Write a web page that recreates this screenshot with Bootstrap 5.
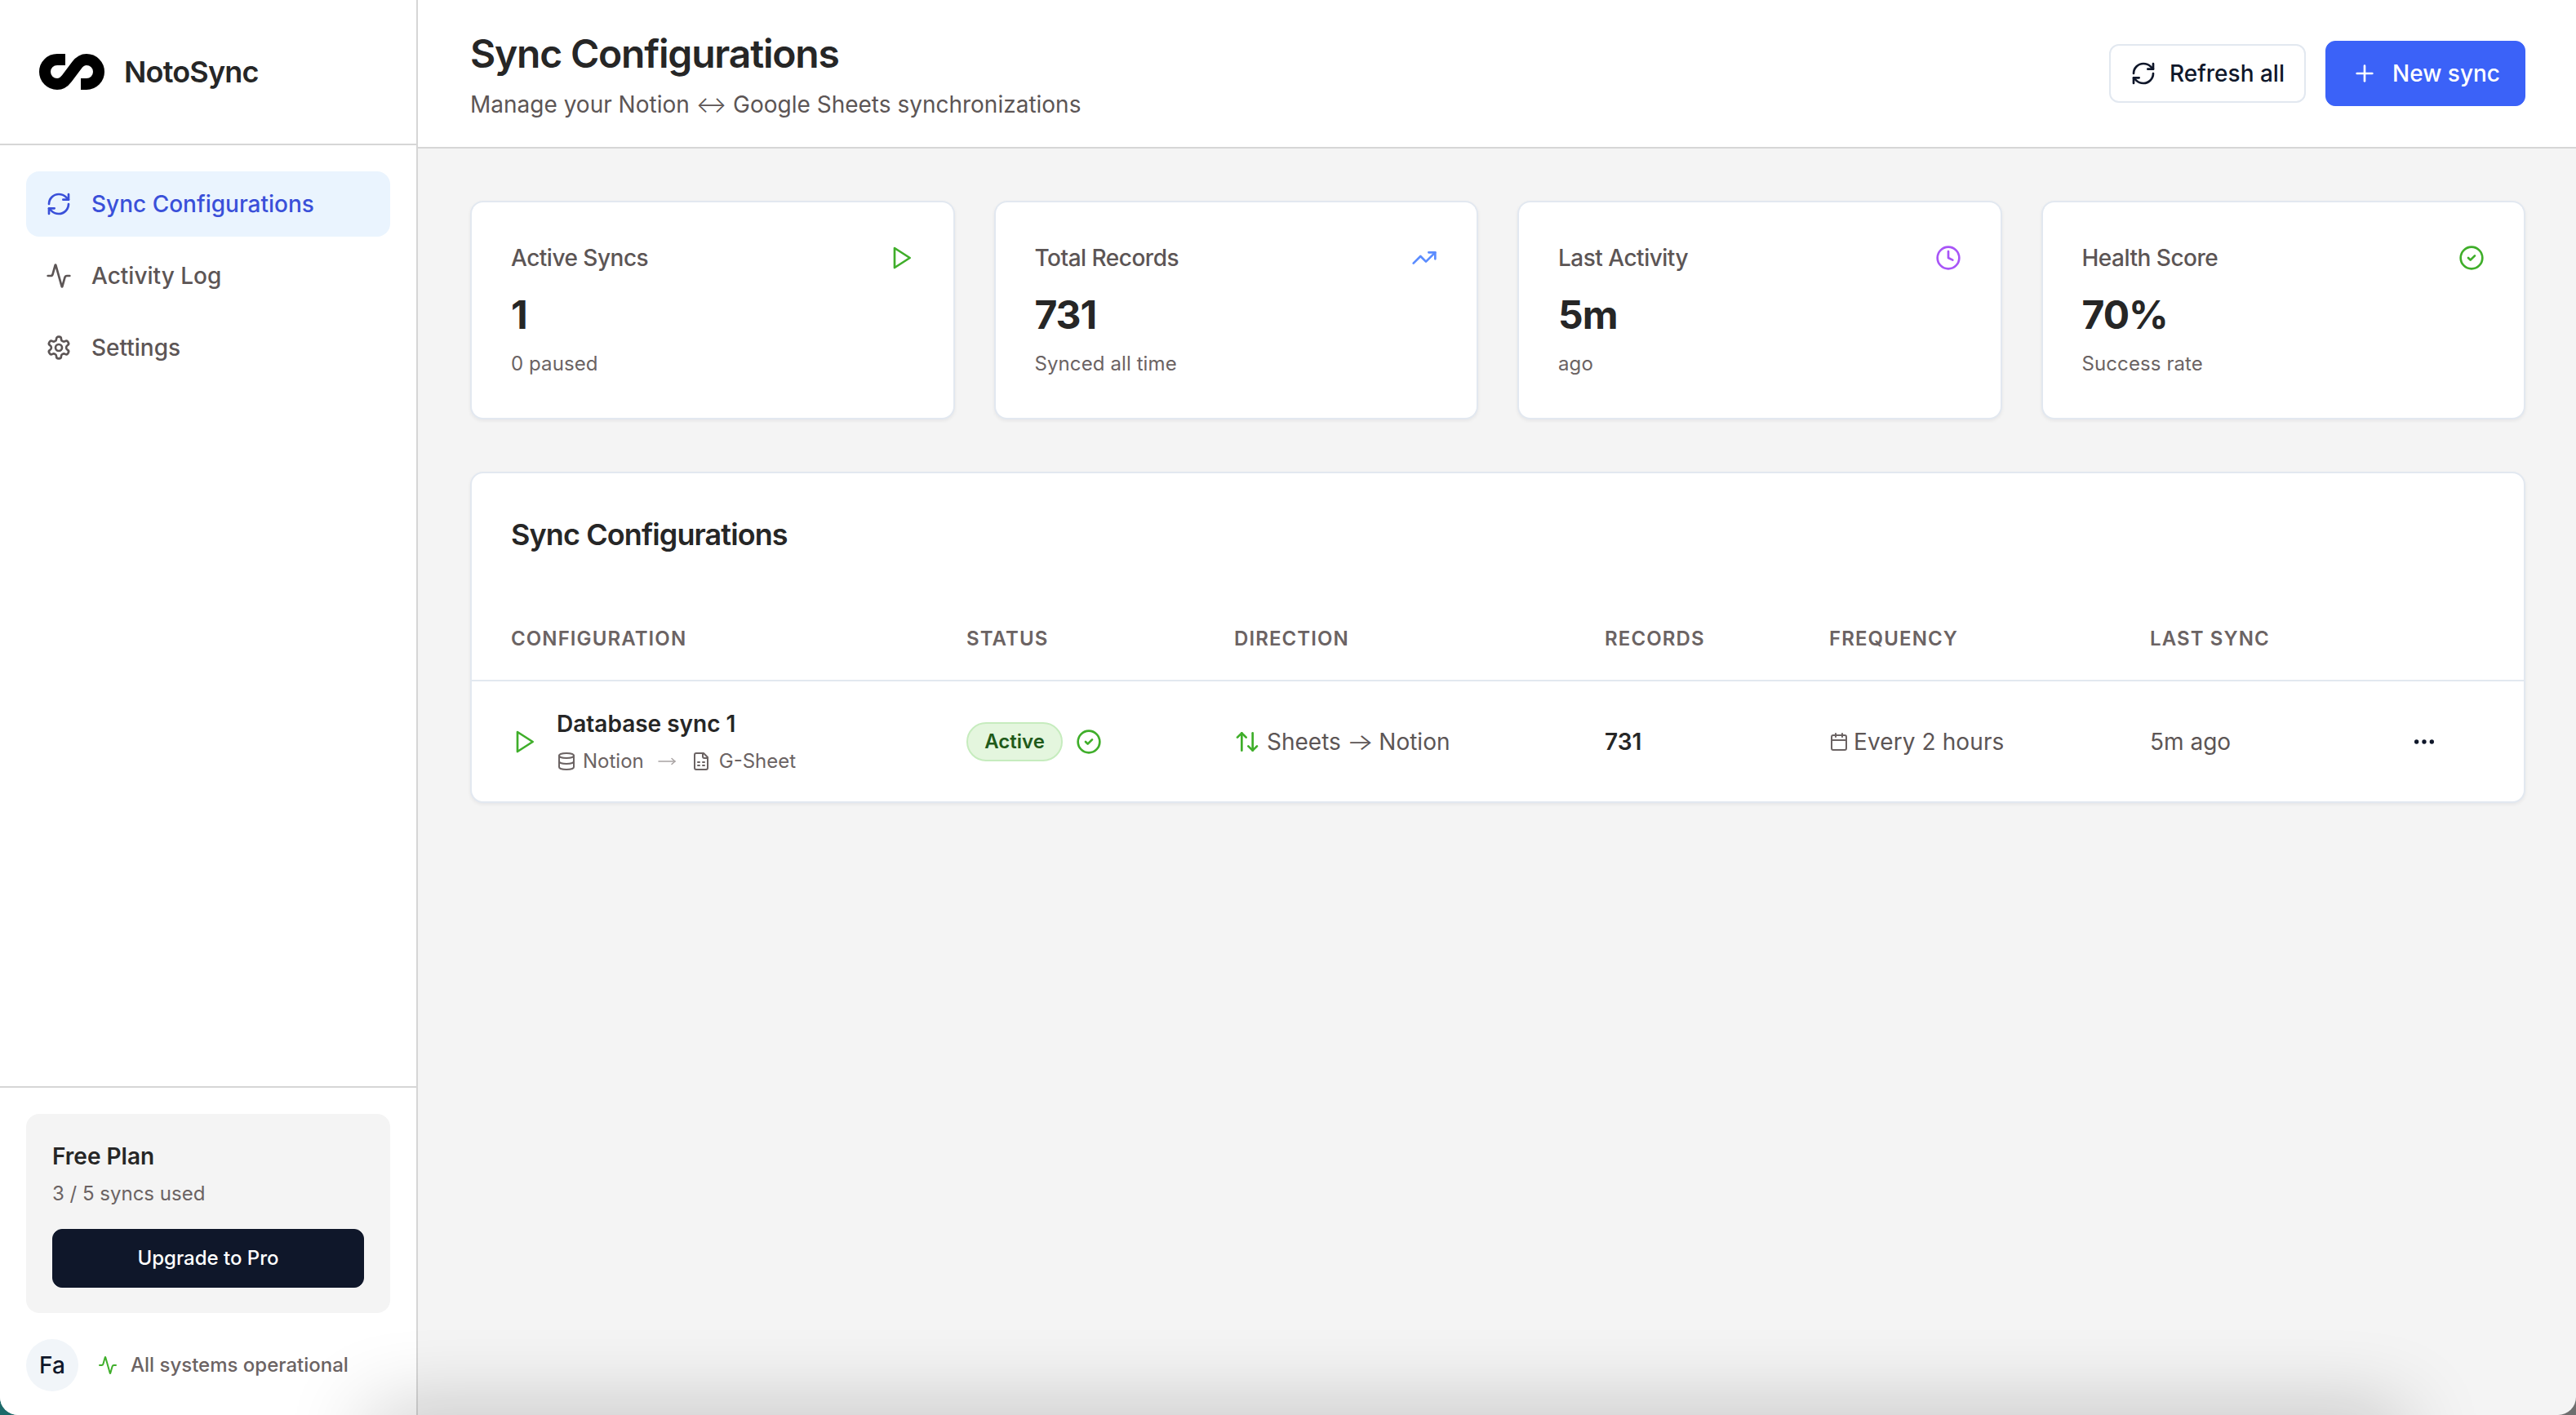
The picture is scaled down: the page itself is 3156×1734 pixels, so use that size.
<!DOCTYPE html>
<html lang="en">
<head>
<meta charset="utf-8">
<title>NotoSync</title>
<link href="https://cdn.jsdelivr.net/npm/bootstrap@5.3.0/dist/css/bootstrap.min.css" rel="stylesheet">
<style>
html,body{height:100%;margin:0}
html{background:linear-gradient(90deg,#1d6a6a 50%,#6e6e6e 50%)}
body{font-family:"Inter","Liberation Sans",sans-serif;font-size:28px;color:#262626;background:transparent;overflow:hidden}
.app-shell{display:flex;height:1734px;background:#f4f4f4;border-radius:0 0 22px 22px;overflow:hidden;position:relative}
.app-side{width:512px;flex:none;background:#fff;border-right:2px solid #d6d6d6;display:flex;flex-direction:column}
.side-brand{height:178px;border-bottom:2px solid #d6d6d6;padding-left:48px;gap:24px;flex:none}
.side-brand span{font-size:36px;font-weight:600;letter-spacing:-.8px;color:#262626}
.side-nav{padding:32px;gap:8px;flex:1}
.side-nav .nav-link{height:80px;border-radius:16px;padding:0 24px;gap:24px;font-size:28px;font-weight:500;color:#5c5555;display:flex;align-items:center}
.side-nav .nav-link.active{background:#eaf4fe;color:#3a50d9}
.side-nav .nav-link svg{width:32px;height:32px}
.side-foot{border-top:2px solid #d6d6d6;padding:32px;flex:none;height:403px}
.plan-box{background:#f4f4f4;border-radius:16px;padding:32px;height:244px;margin-bottom:32px}
.plan-title{font-size:28px;font-weight:600;line-height:40px;color:#262626}
.plan-sub{font-size:24px;line-height:36px;color:#6b6363;margin-top:8px;margin-bottom:25px}
.btn-upgrade{--bs-btn-bg:#0f172a;--bs-btn-hover-bg:#0f172a;--bs-btn-color:#fff;--bs-btn-hover-color:#fff;--bs-btn-border-color:#0f172a;--bs-btn-border-radius:12px;height:72px;width:100%;font-size:24px;font-weight:500;display:flex;align-items:center;justify-content:center;padding:0}
.user-chip{width:64px;height:64px;background:#f1f5f9;color:#0f172a;font-size:28px;font-weight:500;flex:none}
.sys-state{font-size:24px;font-weight:500;color:#6b6363;gap:16px;margin-left:24px}
.sys-state svg{width:24px;height:24px}
.main-pane{flex:1;min-width:0;display:flex;flex-direction:column}
.top-bar{height:182px;background:#fff;border-bottom:2px solid #d6d6d6;padding:0 62px 0 64px;flex:none}
.title-block{padding-top:4px}
.top-bar h1{font-size:48px;font-weight:600;letter-spacing:-1.2px;line-height:60px;margin:0;color:#262626}
.top-bar p{font-size:28px;line-height:40px;color:#5c5555;margin:12px 0 0}
.glyph-both{font-weight:300}
.glyph-right{font-weight:300;display:inline-block;transform:scaleX(1.25);margin:0 2px}
.btn-ghost{--bs-btn-bg:#fff;--bs-btn-border-color:#e2e8f0;--bs-btn-color:#0f172a;--bs-btn-hover-bg:#fff;--bs-btn-hover-border-color:#e2e8f0;--bs-btn-hover-color:#0f172a;--bs-btn-border-radius:12px;--bs-btn-border-width:2px;height:72px;font-size:28px;font-weight:500;padding:0 24px;gap:16px}
.btn-new{--bs-btn-bg:#3b62f8;--bs-btn-border-color:#3b62f8;--bs-btn-color:#fff;--bs-btn-hover-bg:#3b62f8;--bs-btn-hover-border-color:#3b62f8;--bs-btn-hover-color:#fff;--bs-btn-border-radius:12px;height:80px;font-size:28px;font-weight:500;padding:0 30px 0 31px;gap:18px}
.btn-ghost svg,.btn-new svg{width:32px;height:32px}
.pane-body{padding:64px 62px 0 64px}
.stat-row{--bs-gutter-x:48px;--bs-gutter-y:0}
.panel-card{--bs-card-border-color:#e2e8f0;--bs-card-border-width:2px;--bs-card-border-radius:16px;--bs-card-inner-border-radius:14px;box-shadow:0 2px 4px rgba(15,23,42,.06)}
.stat-card{height:268px}
.stat-card .card-body{padding:48px 48px}
.stat-head{font-size:28px;font-weight:500;line-height:40px;color:#5c5555;letter-spacing:-.5px}
.stat-head svg{width:32px;height:32px}
.stat-num{font-size:48px;font-weight:700;line-height:60px;margin-top:20px;color:#262626;letter-spacing:-1px}
.stat-sub{font-size:24px;line-height:36px;color:#6b6363;margin-top:12px;letter-spacing:.1px}
.tbl-card{margin-top:64px;height:406px}
.tbl-title{font-size:36px;font-weight:600;letter-spacing:-.9px;line-height:44px;padding:53px 48px 0;color:#262626;height:142px}
.sync-table{--bs-table-bg:transparent;table-layout:fixed;width:100%;margin:0}
.sync-table th{font-size:24px;font-weight:600;letter-spacing:1.1px;color:#6b6363;text-transform:uppercase;padding:0 0 32px;height:112px;vertical-align:bottom;border-bottom:2px solid #e2e8f0;line-height:36px}
.sync-table td{padding:0;height:148px;vertical-align:middle;border:0}
.sync-table th:first-child,.sync-table td:first-child{padding-left:48px}
.cfg-block{padding-bottom:2px}
.cfg-name{font-size:28px;font-weight:600;line-height:40px;color:#262626}
.cfg-sub{font-size:24px;line-height:32px;color:#6b6363;margin-top:10px;gap:8px}
.cfg-sub svg{width:24px;height:24px}
.cfg-sub svg.cfg-arrow{color:#a8a3a3;margin:0 8px 0 6px;width:28px;height:24px;stroke-width:1.5}
.cfg-sub svg.cfg-file{margin-right:2px}
.ic-play{width:32px;height:32px;color:#3fae2a}
.pill-active{--bs-badge-padding-x:0;--bs-badge-padding-y:0;--bs-badge-font-size:24px;--bs-badge-font-weight:600;--bs-badge-color:#1f5a1a;background:#e4f6de;border:2px solid #c6ecbe;width:118px;height:48px;display:inline-flex;align-items:center;justify-content:center;line-height:1}
.ic-ok{width:32px;height:32px;color:#3fae2a}
.cell-text{font-size:28px;color:#5c5555}
.cell-spaced{letter-spacing:.1px}
.cell-num{font-size:28px;font-weight:600;color:#262626}
.ic-dir{width:32px;height:32px;color:#3fae2a}
.ic-cal{width:24px;height:24px;color:#6b6363}
.ic-more{width:32px;height:32px;color:#0f172a;display:block;margin-left:44px}
.dock-shadow{position:absolute;left:465px;right:226px;top:1745px;height:40px;box-shadow:0 0 100px 15px rgba(0,0,0,.24);pointer-events:none}
svg.lu{fill:none;stroke:currentColor;stroke-width:2;stroke-linecap:round;stroke-linejoin:round;flex:none}
</style>
</head>
<body>
<div class="app-shell">
  <aside class="app-side">
    <div class="side-brand d-flex align-items-center">
      <svg width="80" height="44" viewBox="0 0 80 44" fill="none" aria-hidden="true"><path d="M32 7H22a15 15 0 0 0 0 30c6 0 9-3 12-7l12-16c3-4 6-7 12-7a15 15 0 0 1 0 30H51" stroke="#000" stroke-width="14"/></svg>
      <span>NotoSync</span>
    </div>
    <nav class="nav nav-pills flex-column side-nav d-flex flex-nowrap">
      <a class="nav-link active" href="#"><svg class="lu" viewBox="0 0 24 24"><path d="M3 12a9 9 0 0 1 9-9 9.750 9.750 0 0 1 6.740 2.740L21 8"/><path d="M21 3v5h-5"/><path d="M21 12a9 9 0 0 1-9 9 9.750 9.750 0 0 1-6.740-2.740L3 16"/><path d="M8 16H3v5"/></svg>Sync Configurations</a>
      <a class="nav-link" href="#"><svg class="lu" viewBox="0 0 24 24"><path d="M22 12h-2.480a2 2 0 0 0-1.930 1.460l-2.350 8.360a.25.25 0 0 1-.48 0L9.240 2.180a.25.25 0 0 0-.48 0l-2.350 8.360A2 2 0 0 1 4.490 12H2"/></svg>Activity Log</a>
      <a class="nav-link" href="#"><svg class="lu" viewBox="0 0 24 24"><path d="M12.220 2h-.44a2 2 0 0 0-2 2v.18a2 2 0 0 1-1 1.730l-.43.25a2 2 0 0 1-2 0l-.15-.08a2 2 0 0 0-2.730.73l-.22.38a2 2 0 0 0 .73 2.730l.15.1a2 2 0 0 1 1 1.720v.51a2 2 0 0 1-1 1.740l-.15.09a2 2 0 0 0-.73 2.730l.22.38a2 2 0 0 0 2.730.73l.15-.08a2 2 0 0 1 2 0l.43.25a2 2 0 0 1 1 1.730V20a2 2 0 0 0 2 2h.44a2 2 0 0 0 2-2v-.18a2 2 0 0 1 1-1.730l.43-.25a2 2 0 0 1 2 0l.15.08a2 2 0 0 0 2.730-.73l.22-.39a2 2 0 0 0-.73-2.730l-.15-.08a2 2 0 0 1-1-1.740v-.5a2 2 0 0 1 1-1.740l.15-.09a2 2 0 0 0 .73-2.730l-.22-.38a2 2 0 0 0-2.730-.73l-.15.08a2 2 0 0 1-2 0l-.43-.25a2 2 0 0 1-1-1.730V4a2 2 0 0 0-2-2z"/><circle cx="12" cy="12" r="3"/></svg>Settings</a>
    </nav>
    <div class="side-foot">
      <div class="plan-box">
        <div class="plan-title">Free Plan</div>
        <div class="plan-sub">3 / 5 syncs used</div>
        <button class="btn btn-upgrade" type="button">Upgrade to Pro</button>
      </div>
      <div class="d-flex align-items-center">
        <div class="user-chip rounded-circle d-flex align-items-center justify-content-center">Fa</div>
        <div class="sys-state d-flex align-items-center"><svg class="lu" style="color:#3fae2a" viewBox="0 0 24 24"><path d="M22 12h-2.480a2 2 0 0 0-1.930 1.460l-2.350 8.360a.25.25 0 0 1-.48 0L9.240 2.180a.25.25 0 0 0-.48 0l-2.350 8.360A2 2 0 0 1 4.490 12H2"/></svg>All systems operational</div>
      </div>
    </div>
  </aside>
  <main class="main-pane">
    <header class="top-bar d-flex align-items-center justify-content-between">
      <div class="title-block">
        <h1>Sync Configurations</h1>
        <p>Manage your Notion <span class="glyph-both">↔</span> Google Sheets synchronizations</p>
      </div>
      <div class="d-flex align-items-center gap-4">
        <button class="btn btn-ghost d-flex align-items-center" type="button"><svg class="lu" viewBox="0 0 24 24"><path d="M3 12a9 9 0 0 1 9-9 9.750 9.750 0 0 1 6.740 2.740L21 8"/><path d="M21 3v5h-5"/><path d="M21 12a9 9 0 0 1-9 9 9.750 9.750 0 0 1-6.740-2.740L3 16"/><path d="M8 16H3v5"/></svg>Refresh all</button>
        <button class="btn btn-new d-flex align-items-center" type="button"><svg class="lu" viewBox="0 0 24 24"><path d="M5 12h14"/><path d="M12 5v14"/></svg>New sync</button>
      </div>
    </header>
    <div class="pane-body">
      <div class="row row-cols-4 stat-row">
        <div class="col"><div class="card panel-card stat-card"><div class="card-body">
          <div class="stat-head d-flex justify-content-between align-items-center">Active Syncs<svg class="lu" style="color:#3fae2a" viewBox="0 0 24 24"><polygon points="6 3 20 12 6 21 6 3"/></svg></div>
          <div class="stat-num">1</div><div class="stat-sub">0 paused</div>
        </div></div></div>
        <div class="col"><div class="card panel-card stat-card"><div class="card-body">
          <div class="stat-head d-flex justify-content-between align-items-center">Total Records<svg class="lu" style="color:#5b8cff" viewBox="0 0 24 24"><polyline points="22 7 13.500 15.500 8.500 10.500 2 17"/><polyline points="16 7 22 7 22 13"/></svg></div>
          <div class="stat-num">731</div><div class="stat-sub">Synced all time</div>
        </div></div></div>
        <div class="col"><div class="card panel-card stat-card"><div class="card-body">
          <div class="stat-head d-flex justify-content-between align-items-center">Last Activity<svg class="lu" style="color:#a855f7" viewBox="0 0 24 24"><circle cx="12" cy="12" r="10"/><polyline points="12 6 12 12 16 14"/></svg></div>
          <div class="stat-num">5m</div><div class="stat-sub">ago</div>
        </div></div></div>
        <div class="col"><div class="card panel-card stat-card"><div class="card-body">
          <div class="stat-head d-flex justify-content-between align-items-center">Health Score<svg class="lu" style="color:#3fae2a" viewBox="0 0 24 24"><circle cx="12" cy="12" r="10"/><path d="m9 12 2 2 4-4"/></svg></div>
          <div class="stat-num">70%</div><div class="stat-sub">Success rate</div>
        </div></div></div>
      </div>
      <div class="card panel-card tbl-card">
        <div class="tbl-title">Sync Configurations</div>
        <table class="table sync-table">
          <colgroup><col style="width:606px"><col style="width:328px"><col style="width:454px"><col style="width:275px"><col style="width:393px"><col style="width:276px"><col></colgroup>
          <thead><tr><th>Configuration</th><th>Status</th><th>Direction</th><th>Records</th><th>Frequency</th><th>Last Sync</th><th></th></tr></thead>
          <tbody><tr>
            <td><div class="d-flex align-items-center" style="gap:24px"><svg class="lu ic-play" viewBox="0 0 24 24"><polygon points="6 3 20 12 6 21 6 3"/></svg><div class="cfg-block"><div class="cfg-name">Database sync 1</div><div class="cfg-sub d-flex align-items-center"><svg class="lu" viewBox="0 0 24 24"><ellipse cx="12" cy="5" rx="9" ry="3"/><path d="M3 5V19A9 3 0 0 0 21 19V5"/><path d="M3 12A9 3 0 0 0 21 12"/></svg>Notion<svg class="lu cfg-arrow" viewBox="0 0 24 24"><path d="M2 12h20"/><path d="m18 8.500 4 3.500-4 3.500"/></svg><svg class="lu cfg-file" viewBox="0 0 24 24"><path d="M15 2H6a2 2 0 0 0-2 2v16a2 2 0 0 0 2 2h12a2 2 0 0 0 2-2V7Z"/><path d="M14 2v4a2 2 0 0 0 2 2h4"/><path d="M8 13h2"/><path d="M14 13h2"/><path d="M8 17h2"/><path d="M14 17h2"/></svg>G-Sheet</div></div></div></td>
            <td><div class="d-flex align-items-center" style="gap:16px"><span class="badge rounded-pill pill-active">Active</span><svg class="lu ic-ok" viewBox="0 0 24 24"><circle cx="12" cy="12" r="10"/><path d="m9 12 2 2 4-4"/></svg></div></td>
            <td><div class="d-flex align-items-center cell-text" style="gap:8px"><svg class="lu ic-dir" viewBox="0 0 24 24"><path d="m21 16-4 4-4-4"/><path d="M17 20V4"/><path d="m3 8 4-4 4 4"/><path d="M7 4v16"/></svg><span>Sheets <span class="glyph-right">→</span> Notion</span></div></td>
            <td class="cell-num">731</td>
            <td><div class="d-flex align-items-center cell-text cell-spaced" style="gap:6px"><svg class="lu ic-cal" viewBox="0 0 24 24"><path d="M8 2v4"/><path d="M16 2v4"/><rect x="3" y="4" width="18" height="18" rx="2"/><path d="M3 10h18"/></svg>Every 2 hours</div></td>
            <td class="cell-text">5m ago</td>
            <td><svg class="lu ic-more" viewBox="0 0 24 24"><circle cx="12" cy="12" r="1"/><circle cx="19" cy="12" r="1"/><circle cx="5" cy="12" r="1"/></svg></td>
          </tr></tbody>
        </table>
      </div>
    </div>
  </main>
  <div class="dock-shadow"></div>
</div>
<script src="https://cdn.jsdelivr.net/npm/bootstrap@5.3.0/dist/js/bootstrap.bundle.min.js"></script>
</body>
</html>
